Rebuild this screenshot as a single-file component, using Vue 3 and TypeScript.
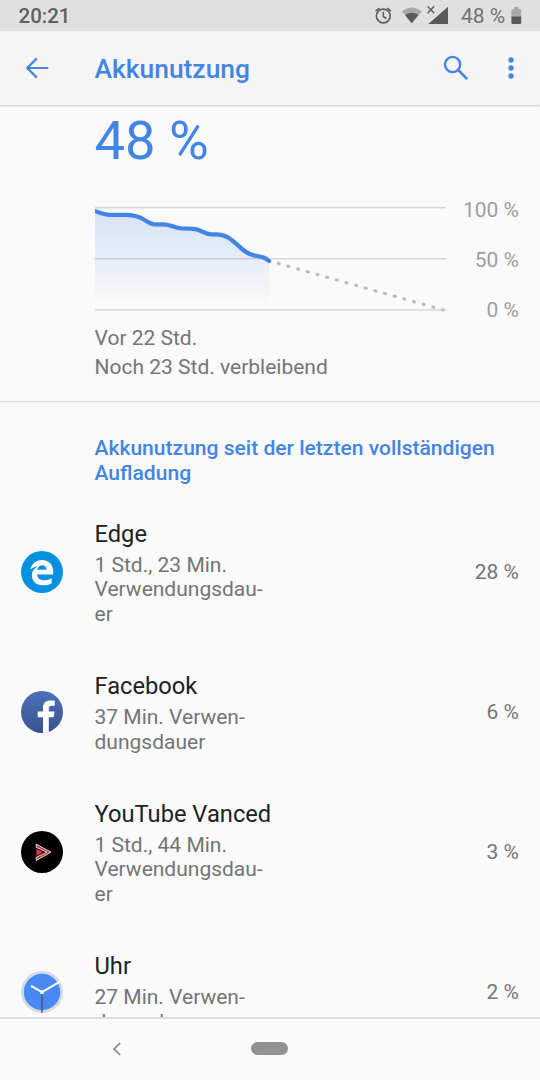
<script setup lang="ts">
interface AppUsage {
  id: string
  name: string
  usage: string[]
  percent: string
}

const apps: AppUsage[] = [
  { id: 'edge', name: 'Edge', usage: ['1 Std., 23 Min.', 'Verwendungsdau-', 'er'], percent: '28 %' },
  { id: 'facebook', name: 'Facebook', usage: ['37 Min. Verwen-', 'dungsdauer'], percent: '6 %' },
  { id: 'vanced', name: 'YouTube Vanced', usage: ['1 Std., 44 Min.', 'Verwendungsdau-', 'er'], percent: '3 %' },
  { id: 'clock', name: 'Uhr', usage: ['27 Min. Verwen-', 'dungsdauer'], percent: '2 %' },
]
const curve =
  'M0 4 C4 5.6 8 7.4 14 7.8 L30 7.9 C38 8 43 9 48 12 C53 15 55 17.5 60 17.4 L68 17.4 C76 17.4 78 20.6 86 21.4 L96 21.7 C107 21.7 107 26.6 116 27.3 L121 27.4 C132 27.4 137 33 143 38.4 C149 44 153 47.4 159 48.4 C167 49.9 170 50.2 174 54'
</script>

<template>
  <div class="screen">
    <header class="status">
      <span class="time">20:21</span>
      <svg class="status-icons" width="78" height="31" viewBox="0 0 78 31">
        <g fill="none" stroke="#5e5e5e" stroke-width="1.6">
          <circle cx="11.3" cy="16" r="6.9" />
          <path d="M11.3 11.7v4.8l3.2 2M3.6 11.2l3.8-3.1M19 11.2l-3.8-3.1" />
        </g>
        <path d="M30 11.4Q39.7 3.6 49.6 11.4L39.8 23.3z" fill="#a9a9a9" />
        <path d="M33.1 15.1Q39.8 10.6 46.5 15.1L39.8 23.3z" fill="#5a5a5a" />
        <path d="M76 6.7V24H56.3z" fill="#5a5a5a" />
        <path d="M55.6 6.2l6.6 7M62.2 6.2l-6.6 7" stroke="#5e5e5e" stroke-width="1.4" />
      </svg>
      <span class="level">48 %</span>
      <svg class="battery" width="11" height="31" viewBox="0 0 11 31">
        <path d="M3 7h4.6v2H9.2q1 0 1 1v7H.4v-7q0-1 1-1H3z" fill="#a9a9a9" />
        <path d="M.4 16.4h9.8V23q0 1-1 1H1.4q-1 0-1-1z" fill="#5a5a5a" />
      </svg>
    </header>

    <nav class="toolbar">
      <svg width="24" height="24" viewBox="0 0 24 24" fill="none" stroke="#4285e4" stroke-width="2.2">
        <path d="M23.3 12H2M11.8 2.4L2.2 12l9.6 9.6" />
      </svg>
      <h1>Akkunutzung</h1>
      <svg class="search" width="26" height="26" viewBox="0 0 26 26" fill="none" stroke="#4285e4">
        <circle cx="9.6" cy="9.5" r="7.6" stroke-width="2.4" />
        <path d="M15 14.9l9.2 9.2" stroke-width="2.7" />
      </svg>
      <svg class="more" width="6" height="24" viewBox="0 0 6 24" fill="#4285e4">
        <circle cx="3" cy="4" r="2.7" /><circle cx="3" cy="12" r="2.7" /><circle cx="3" cy="20" r="2.7" />
      </svg>
    </nav>

    <main class="content">
      <section class="summary">
        <div class="total">48 %</div>
        <div class="chart">
          <svg width="351" height="108" viewBox="0 -2 351 108">
            <defs>
              <linearGradient id="fade" x1="0" y1="0" x2="0" y2="98" gradientUnits="userSpaceOnUse">
                <stop offset="0" stop-color="#4285e4" stop-opacity=".2" />
                <stop offset=".5" stop-color="#4285e4" stop-opacity=".12" />
                <stop offset="1" stop-color="#4285e4" stop-opacity="0" />
              </linearGradient>
              <clipPath id="plot"><rect x="0" y="-2" width="351" height="108" /></clipPath>
            </defs>
            <path d="M0 .7H351M0 51.7H351M0 103H351" stroke="#d6d7d9" stroke-width="1.4" />
            <path :d="curve + ' V98 H0z'" fill="url(#fade)" />
            <path :d="curve" fill="none" stroke="#4285e4" stroke-width="4.2" stroke-linecap="round" clip-path="url(#plot)" />
            <path d="M183.4 56.5L348 102.9" stroke="#b9bbc0" stroke-width="3.2" stroke-linecap="round" stroke-dasharray=".9 9.13" />
          </svg>
          <div class="scale"><span>100 %</span><span>50 %</span><span>0 %</span></div>
        </div>
        <div class="range">Vor 22 Std.<br />Noch 23 Std. verbleibend</div>
      </section>

      <h2>Akkunutzung seit der letzten vollständigen Aufladung</h2>

      <ul>
        <li v-for="app in apps" :key="app.id">
          <svg class="icon" width="42" height="42" viewBox="0 0 42 42">
            <template v-if="app.id === 'edge'">
              <circle cx="21" cy="21" r="21" fill="#0690e0" />
              <path
                d="M9.3 18.6C10.7 12.6 15 9 21 9c7 0 11.2 5 11.2 11.5v3H16.1c.2 4 3.5 5.8 7.4 5.8 2.7 0 5.1-.8 7.1-2v5.1C28.2 33.7 25.5 34.2 22 34.2c-6.8 0-11.1-3.9-11.1-9.7 0-4.2 2.3-7.5 6.2-9.1-3.5.2-6.1 1.2-7.8 3.2zM16.3 18.8h9.2c0-2.7-1.4-4.5-4.1-4.5-2.7 0-4.6 1.7-5.1 4.5z"
                fill="#fff"
                fill-rule="evenodd"
              />
            </template>
            <template v-else-if="app.id === 'facebook'">
              <defs>
                <linearGradient id="fb" x1="0" y1="0" x2="0" y2="1">
                  <stop offset="0" stop-color="#4b71b8" /><stop offset="1" stop-color="#38528f" />
                </linearGradient>
              </defs>
              <circle cx="21" cy="21" r="21" fill="url(#fb)" />
              <path d="M22 42V26.3h-5.3v-5.7H22V17c0-5 2.8-7.4 7.6-7.4h4.1v5.1h-2.9c-2.5 0-3 1.2-3 3v2.9h5.7l-.8 5.7h-4.9v14.6Q25 41.8 22 42z" fill="#fff" />
            </template>
            <template v-else-if="app.id === 'vanced'">
              <circle cx="21" cy="21" r="21" fill="#000" />
              <path d="M15.2 13.2v3.1L26 21.2l-10.8 5.1v3.1L30 21.2z" fill="#b83336" stroke="#f2dcda" stroke-width="1" />
              <path d="M15.4 17.7v7.2l6.8-3.6z" fill="#df373d" />
            </template>
            <template v-else>
              <circle cx="21" cy="21" r="21" fill="#d1dae5" />
              <circle cx="21" cy="21" r="18.2" fill="#4889f4" />
              <path d="M21 21v20.8" stroke="#4b596e" stroke-width="1.5" />
              <path d="M10 14.8L21 21l18-10.3" fill="none" stroke="#fff" stroke-width="2" />
              <circle cx="21" cy="21.2" r="2" fill="#fff" />
            </template>
          </svg>
          <div class="details">
            <div class="name">{{ app.name }}</div>
            <div v-for="line in app.usage" :key="line" class="usage">{{ line }}</div>
          </div>
          <span class="percent">{{ app.percent }}</span>
        </li>
      </ul>
    </main>

    <footer class="navbar">
      <svg width="10" height="14" viewBox="0 0 10 14" fill="none" stroke="#858585" stroke-width="1.7"><path d="M8.2 1L2 7l6.2 6" /></svg>
      <span class="pill"></span>
    </footer>
  </div>
</template>

<style>
body {
  margin: 0;
}
</style>

<style scoped>
.screen {
  width: 540px;
  height: 1080px;
  display: flex;
  flex-direction: column;
  overflow: hidden;
  background: #fafafa;
  font-family: Roboto, sans-serif;
  color: #757575;
  font-size: 21px;
  line-height: 24.6px;
}
.status {
  flex: 0 0 31px;
  display: flex;
  align-items: center;
  background: #e0e0e0;
  color: #5f5f5f;
  padding: 2px 18px 0 18.5px;
  box-sizing: border-box;
}
.status svg {
  margin-top: -2px;
}
.time {
  font-weight: 500;
  font-size: 20.5px;
}
.status-icons {
  margin-left: auto;
}
.level {
  margin-left: 11px;
  width: 44px;
  font-size: 21px;
  white-space: nowrap;
  color: #727272;
}
.battery {
  margin-left: 6px;
}
.toolbar {
  flex: 0 0 74px;
  display: flex;
  align-items: center;
  background: #f5f5f5;
  padding: 0 26px 0 25px;
  box-sizing: border-box;
  box-shadow: 0 1px 2px rgba(0, 0, 0, 0.2);
  z-index: 1;
}
h1 {
  margin: 2px auto 0 45.5px;
  font-size: 26.4px;
  line-height: 32px;
  font-weight: 500;
  color: #4285e4;
}
.more {
  margin-left: 39px;
}
.content {
  flex: 1;
  min-height: 0;
  overflow: hidden;
}
.summary {
  height: 296px;
  border-bottom: 1px solid #d9d9d9;
  padding-left: 94.5px;
}
.total {
  padding-top: 3px;
  height: 97px;
  font-size: 54.3px;
  line-height: 66px;
  color: #4285e4;
}
.chart {
  display: flex;
  height: 108px;
}
.scale {
  width: 73.5px;
  height: 125px;
  margin-top: -7px;
  display: flex;
  flex-direction: column;
  justify-content: space-between;
  text-align: right;
  color: #9e9e9e;
}
.chart svg {
  flex: none;
}
.range {
  margin-top: 11px;
  line-height: 28.5px;
}
h2 {
  margin: 34px 21px 0 94.5px;
  font-size: 21.05px;
  line-height: 24.6px;
  font-weight: 500;
  color: #4285e4;
}
ul {
  margin: 11px 0 0;
  padding: 0;
  list-style: none;
}
li {
  display: flex;
  align-items: center;
  padding: 25px 21px 25.5px;
}
.icon {
  flex: none;
  margin-right: 31.5px;
}
.details {
  flex: 1;
  margin-bottom: -3.6px;
}
.name {
  font-size: 23.7px;
  line-height: 27.7px;
  color: #212121;
  padding-bottom: 3.9px;
}
.percent {
  padding-top: 1.4px;
}
.navbar {
  flex: 0 0 63px;
  box-sizing: border-box;
  border-top: 2px solid #dedede;
  display: flex;
  align-items: center;
  padding: 0 0 2px 112px;
}
.pill {
  width: 37px;
  height: 13px;
  border-radius: 7px;
  background: #929292;
  margin-left: 129px;
}
</style>
